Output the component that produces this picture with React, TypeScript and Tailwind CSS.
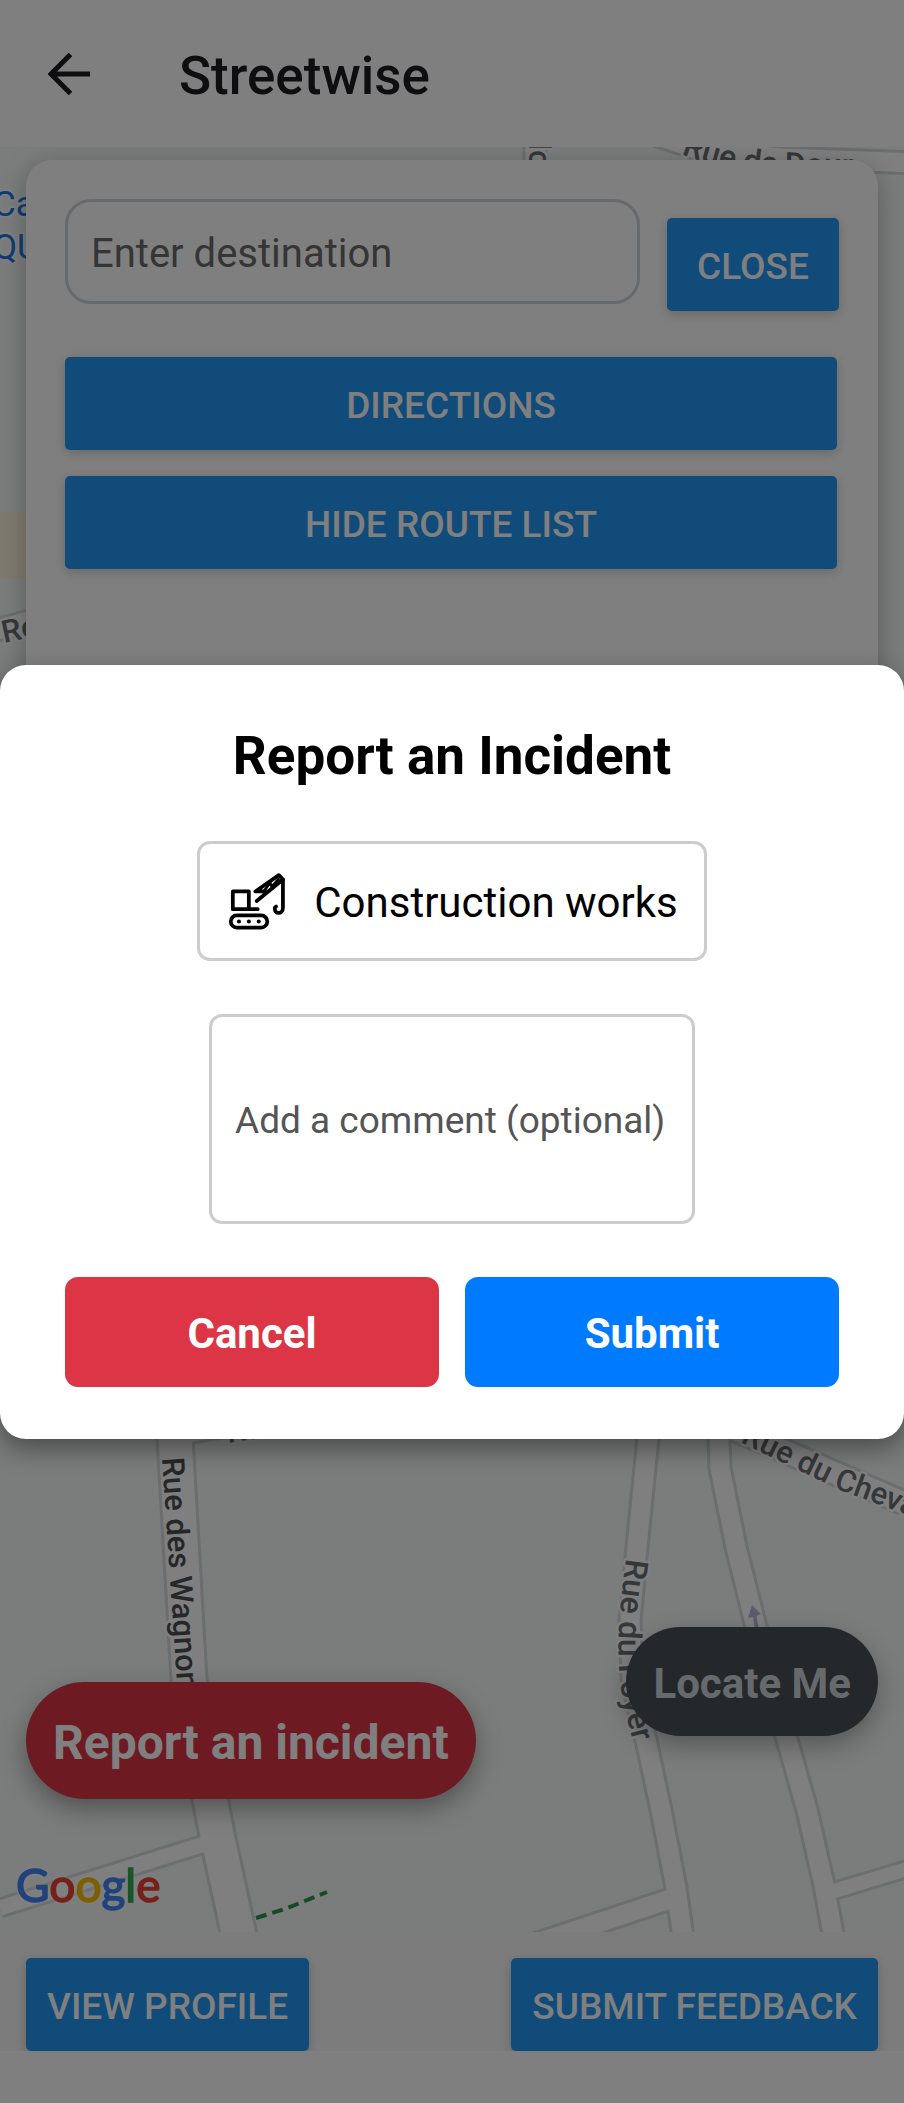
import type { ReactNode } from "react";

function BackArrow() {
  return (
    <svg viewBox="0 0 42 42" className="h-[42px] w-[42px]" fill="none" stroke="#1c1b1f" strokeWidth="5" aria-hidden="true">
      <path d="M42 21H4M22.500 1.500L3 21l19.500 19.500" />
    </svg>
  );
}

function CraneIcon() {
  return (
    <svg viewBox="58 36 176 176" className="h-[60px] w-[60px] shrink-0" fill="none" stroke="#000" strokeWidth="11" strokeLinecap="round" strokeLinejoin="round" aria-hidden="true">
      <g transform="translate(6 0)">
        <path d="M145 148H72V96H119V148" />
        <rect x="66" y="166" width="107" height="36" rx="18" />
        <path d="M142 124L219 61L207 48L138 96H166" />
        <path d="M162 98L181 70L186 82L206 60" strokeWidth="8" />
        <path d="M219 61V144C219 164 194 164 195 144L199 140" strokeWidth="11" />
        <g fill="#000" stroke="none">
          <circle cx="90" cy="184" r="6" />
          <circle cx="119" cy="184" r="6" />
          <circle cx="148" cy="184" r="6" />
        </g>
      </g>
    </svg>
  );
}

type Road = { d: string; w: number };

const roads: Road[] = [
  { d: "M180 1434L300 1414", w: 22 },
  { d: "M0 1908L214 1841", w: 18 },
  { d: "M174 1400L175 1438L189 1680L197 1740L210 1799L217 1835L241 1945", w: 36 },
  { d: "M520 1949L670 1899", w: 22 },
  { d: "M652 1400L648 1438L636 1557L630 1620L632 1680L646 1740L661 1810L676 1888L684 1945", w: 22 },
  { d: "M834 1891L920 1865", w: 17 },
  { d: "M719 1400V1438L720 1468L736 1547L756 1627L786 1736L807 1810L824 1885L835 1945", w: 22 },
  { d: "M720 1423L904 1503", w: 24 },
  { d: "M640 130L700 150L780 158L920 163", w: 22 },
  { d: "M535 130V300", w: 22 },
  { d: "M-10 632L60 612", w: 22 },
];

function MapCanvas() {
  return (
    <svg viewBox="0 147 904 1785" preserveAspectRatio="xMidYMid slice" className="absolute inset-0 h-full w-full" role="img" aria-label="Street map">
      <defs>
        <path id="dour" d="M681 154C716 168 756 174 788 175L900 177" />
        <path id="foyer" d="M626 1558C618 1618 617 1650 620 1682C624 1708 630 1730 640 1770" />
        <path id="cheval" d="M740 1442L842 1491L930 1523" />
      </defs>
      <rect x="0" y="147" width="904" height="1785" fill="#f6faf8" />
      <rect x="0" y="512" width="60" height="66" fill="#fef4e0" />
      <g fill="none" stroke="#d6dbdf" strokeLinejoin="round">
        {roads.map((r) => (
          <path key={r.d} d={r.d} strokeWidth={r.w + 3} />
        ))}
      </g>
      <g fill="none" stroke="#fff" strokeLinejoin="round">
        {roads.map((r) => (
          <path key={r.d} d={r.d} strokeWidth={r.w - 3} />
        ))}
      </g>
      <path d="M256 1918L285 1909L327 1892" fill="none" stroke="#2c9448" strokeWidth="4" strokeDasharray="11 6" />
      <path d="M752 1605L761 1614L756.500 1616L759 1630H755L753 1617L748 1618Z" fill="#b8b8d8" />
      <g className="font-[Roboto,sans-serif] font-medium" fontSize="31" fill="#6a6e73" stroke="#fff" strokeWidth="5" strokeLinejoin="round" paintOrder="stroke">
        <text fontSize="32"><textPath href="#dour">Rue de Dour</textPath></text>
        <text transform="translate(529 142) rotate(90)">lo</text>
        <text transform="translate(4 643) rotate(-12)">Re</text>
        <text transform="translate(228 1443) rotate(-9)">Ru</text>
        <text transform="translate(162 1458) rotate(86.200)" fill="#4a4e52">Rue des Wagnon</text>
        <text fontSize="32"><textPath href="#foyer">Rue du Foyer</textPath></text>
        <text><textPath href="#cheval">Rue du Cheval</textPath></text>
      </g>
      <g className="font-[Roboto,sans-serif]" fontSize="35" fill="#2277e4" stroke="#fff" strokeWidth="4" strokeLinejoin="round" paintOrder="stroke">
        <text x="-7" y="216">Ca</text>
        <text x="-7" y="259">QU</text>
      </g>
      <text x="16" y="1902" className="font-[Lato,sans-serif] drop-shadow-[0_0_3px_#fff]" fontSize="46" strokeWidth="1.500">
        <tspan fill="#4285f4" stroke="#4285f4">G</tspan>
        <tspan fill="#ea4335" stroke="#ea4335">o</tspan>
        <tspan fill="#fbbc04" stroke="#fbbc04">o</tspan>
        <tspan fill="#4285f4" stroke="#4285f4">g</tspan>
        <tspan fill="#34a853" stroke="#34a853">l</tspan>
        <tspan fill="#ea4335" stroke="#ea4335">e</tspan>
      </text>
    </svg>
  );
}

function BlueButton({ children, className = "" }: { children: ReactNode; className?: string }) {
  return (
    <button type="button" className={`h-[93px] rounded-[5px] bg-[#2196f3] pt-[4px] text-[37px] font-medium text-white shadow-[0_3px_12px_rgba(0,0,0,0.2)] ${className}`}>
      {children}
    </button>
  );
}

function SearchPanel() {
  return (
    <section className="relative mx-[26px] mt-[13px] flex h-[700px] flex-col rounded-[26px] bg-white px-[39px] py-[39px] shadow-[0_6px_26px_rgba(0,0,0,0.28)]">
      <div className="flex gap-[27px]">
        <input
          type="text"
          aria-label="Destination"
          placeholder="Enter destination"
          className="h-[105px] min-w-0 flex-1 rounded-[26px] border-[3px] border-[#ced4da] px-[23px] pt-[4px] text-[40px] text-black placeholder:text-[#6b6b6b]"
        />
        <BlueButton className="mt-[19px] w-[172px] shrink-0">CLOSE</BlueButton>
      </div>
      <div className="mt-[46px] flex flex-col gap-[26px] pr-[2px]">
        <BlueButton>DIRECTIONS</BlueButton>
        <BlueButton>HIDE ROUTE LIST</BlueButton>
      </div>
    </section>
  );
}

function IncidentDialog() {
  return (
    <div role="dialog" aria-modal="true" aria-labelledby="incident-title" className="flex w-full flex-col items-center rounded-[26px] bg-white p-[52px] shadow-[0_10px_26px_rgba(0,0,0,0.4)]">
      <h2 id="incident-title" className="text-[53px] leading-[78px] font-bold text-black">Report an Incident</h2>
      <button type="button" className="mt-[46px] flex h-[120px] items-center gap-[28px] rounded-[13px] border-[3px] border-[#ccc] px-[26px] text-[42px] text-black">
        <CraneIcon />
        <span className="pt-[4px]">Construction works</span>
      </button>
      <textarea
        aria-label="Comment"
        placeholder="Add a comment (optional)"
        className="mt-[53px] h-[210px] w-[486px] max-w-full resize-none rounded-[13px] border-[3px] border-[#ccc] px-[23px] pt-[82px] pb-[78px] text-[37px] leading-[44px] text-black placeholder:text-[#555]"
      />
      <div className="mt-[53px] flex w-full gap-[26px] px-[13px]">
        <button type="button" className="h-[110px] flex-1 rounded-[13px] bg-[#dc3545] pt-[4px] text-[42px] font-bold text-white">Cancel</button>
        <button type="button" className="h-[110px] flex-1 rounded-[13px] bg-[#007bff] pt-[4px] text-[42px] font-bold text-white">Submit</button>
      </div>
    </div>
  );
}

export default function App() {
  return (
    <div className="relative flex min-h-screen flex-col bg-white font-[Roboto,sans-serif]">
      <header className="flex h-[147px] items-center gap-[89px] px-[48px]">
        <button type="button" aria-label="Back"><BackArrow /></button>
        <h1 className="pt-[6px] text-[53px] font-medium text-[#1c1b1f]">Streetwise</h1>
      </header>
      <main className="relative flex-1 overflow-hidden">
        <MapCanvas />
        <SearchPanel />
        <button type="button" className="absolute bottom-[133px] left-[26px] h-[117px] rounded-full bg-[#dc3545] px-[27px] pt-[4px] text-[48px] font-bold text-white shadow-[0_10px_26px_rgba(0,0,0,0.35)]">
          Report an incident
        </button>
        <button type="button" className="absolute right-[26px] bottom-[196px] h-[109px] rounded-full bg-[#495057] px-[27px] pt-[4px] text-[42px] font-bold text-[#ced4da] shadow-[0_10px_26px_rgba(0,0,0,0.3)]">
          Locate Me
        </button>
      </main>
      <footer className="flex h-[119px] items-end justify-between overflow-hidden bg-[#f9f9f9] px-[26px]">
        <BlueButton className="px-[21px]">VIEW PROFILE</BlueButton>
        <BlueButton className="px-[21px]">SUBMIT FEEDBACK</BlueButton>
      </footer>
      <div className="h-[52px] bg-white" />
      <div className="absolute inset-0 flex items-center bg-black/50">
        <IncidentDialog />
      </div>
    </div>
  );
}
